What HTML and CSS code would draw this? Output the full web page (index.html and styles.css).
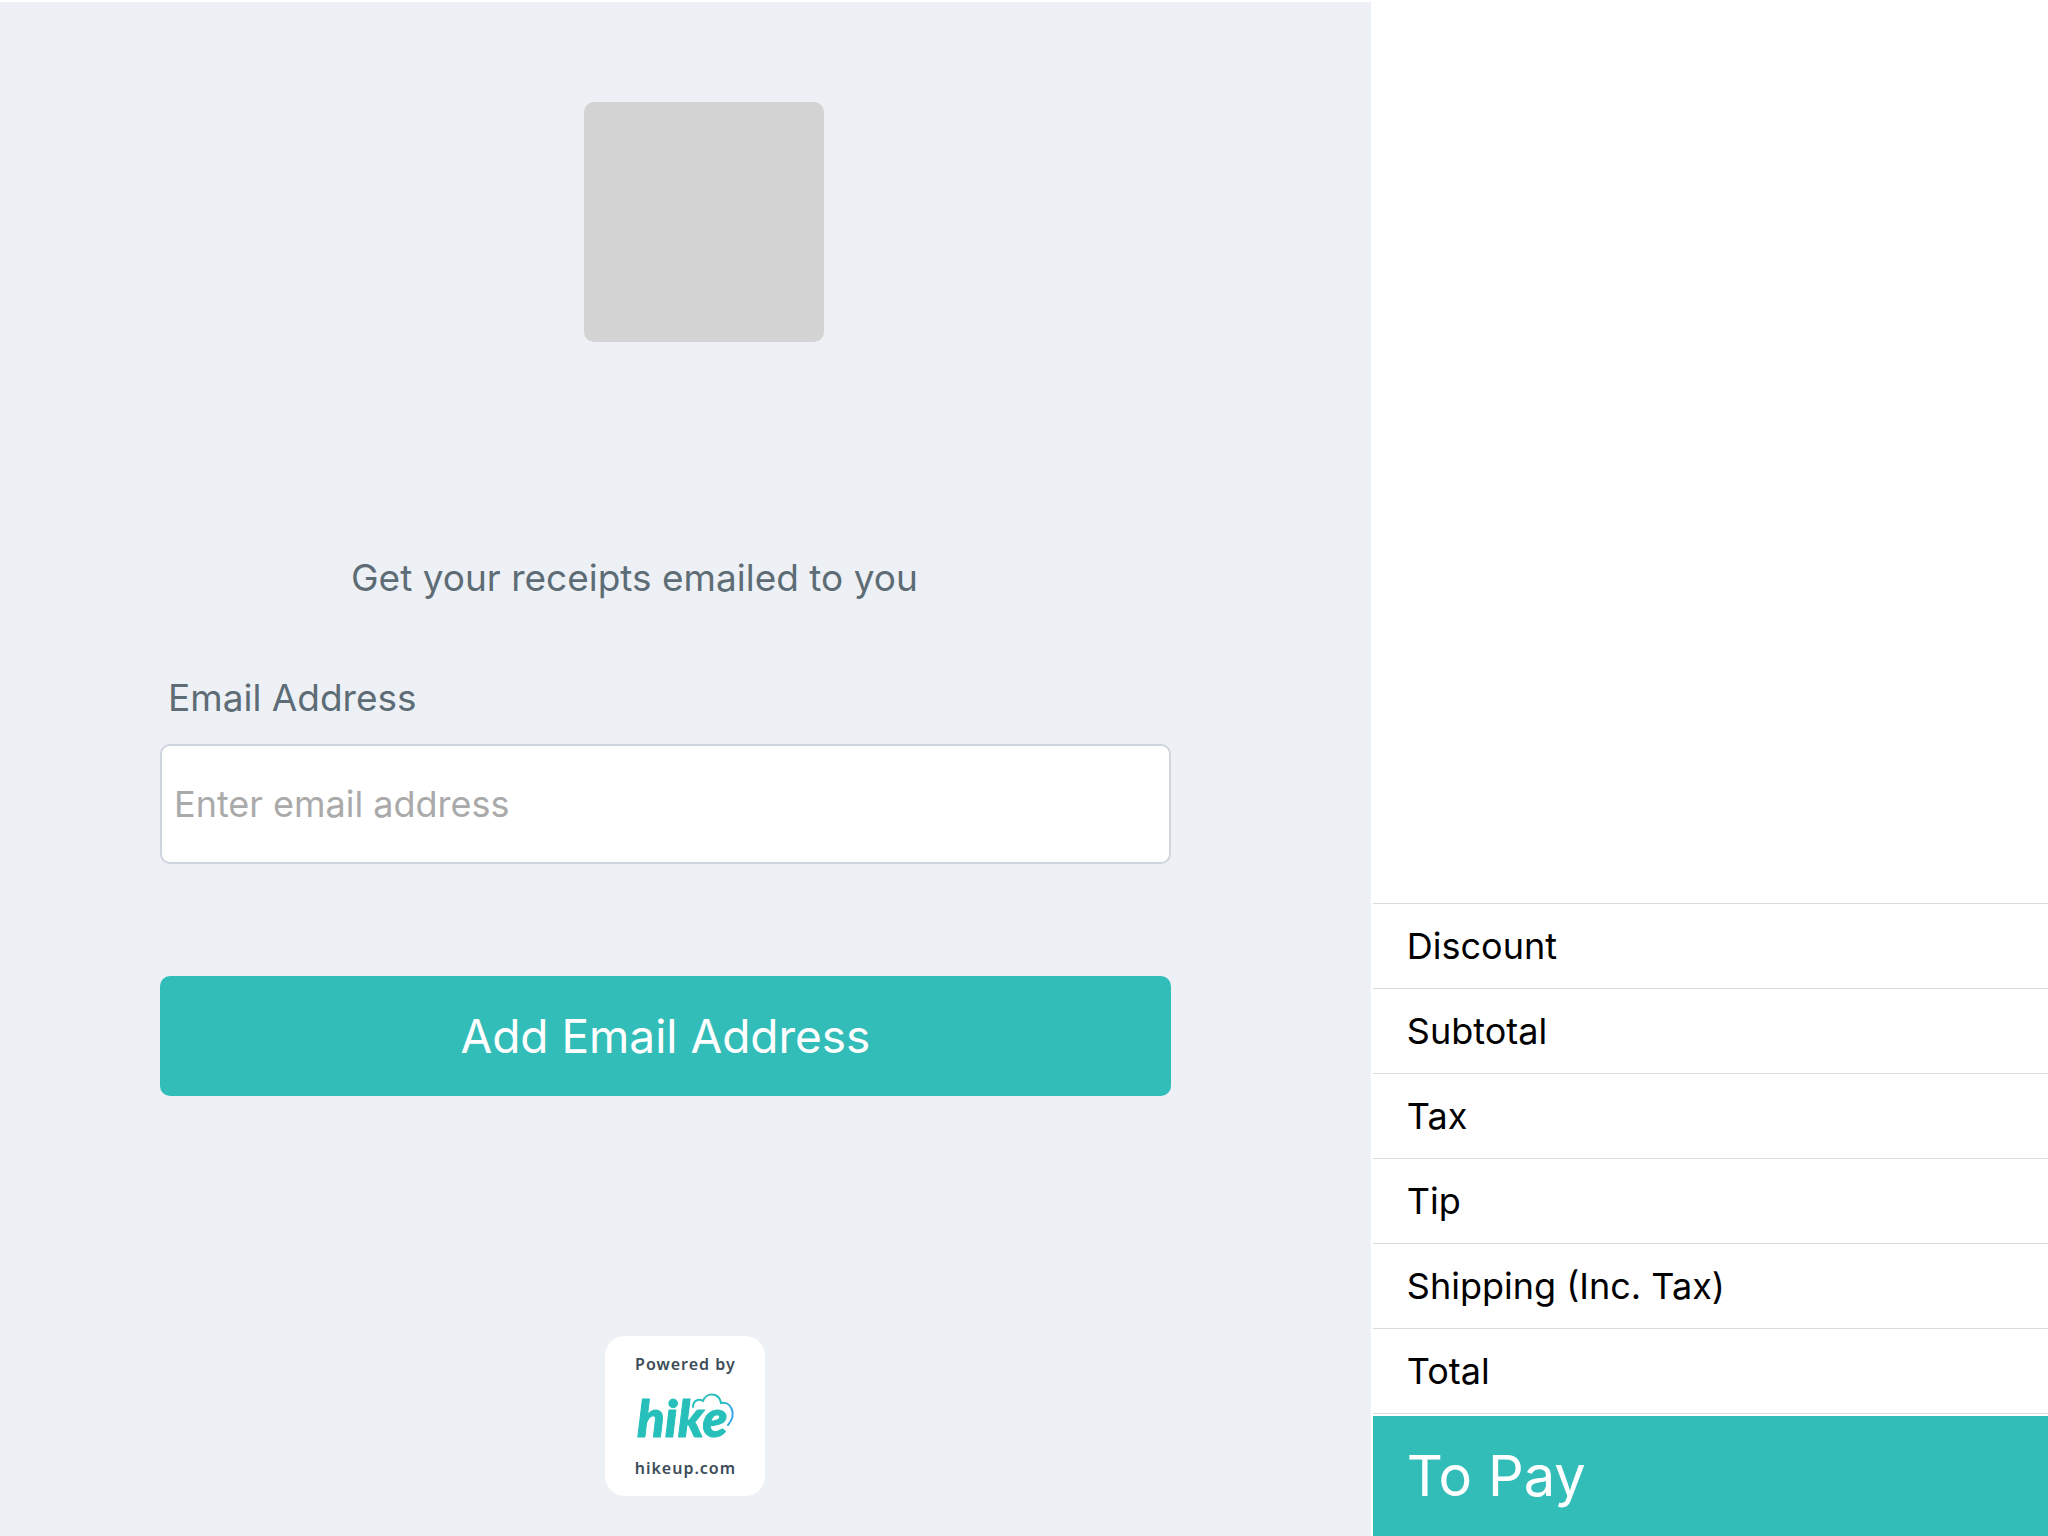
FILE: index.html
```html
<!DOCTYPE html>
<html lang="en">
<head>
    <meta charset="UTF-8">
    <meta name="viewport" content="width=device-width, initial-scale=1.0">
    <title>Customer display</title>
    <link rel="stylesheet" href="styles.css">
</head>
<body>
    <main class="panel">
        <div class="store-logo"></div>
        <h1 class="title">Get your receipts emailed to you</h1>
        <form class="email-form">
            <label for="email">Email Address</label>
            <input type="email" id="email" name="email" placeholder="Enter email address">
            <button type="submit">Add Email Address</button>
        </form>
        <footer class="powered">
            <span>Powered by</span>
            <svg class="hike-logo" viewBox="0 0 100 64" role="img" aria-label="hike">
                <defs>
                    <linearGradient id="cloud" x1="0" y1="0" x2="1" y2="0">
                        <stop offset="0" stop-color="#27bfba"/>
                        <stop offset="0.7" stop-color="#27bfba"/>
                        <stop offset="1" stop-color="#35a4e8"/>
                    </linearGradient>
                </defs>
                <text class="hike-word" x="2" y="53">hike</text>
                <path class="hike-cloud" d="M58 23C58 17 63 14 68 17C71 8 84 8 86 19C95 17 103 29 93 41" stroke="url(#cloud)"/>
            </svg>
            <span>hikeup.com</span>
        </footer>
    </main>
    <aside class="summary">
        <ul class="totals">
            <li>Discount</li>
            <li>Subtotal</li>
            <li>Tax</li>
            <li>Tip</li>
            <li>Shipping (Inc. Tax)</li>
            <li>Total</li>
        </ul>
        <div class="to-pay">To Pay</div>
    </aside>
</body>
</html>
```
FILE: styles.css
```css
*, *::before, *::after {
    margin: 0;
    padding: 0;
    box-sizing: border-box;
}
body {
    min-height: 100vh;
    padding-top: 2px;
    display: grid;
    grid-template-columns: minmax(0, 67fr) minmax(0, 33fr);
    gap: 2px;
    background: #fff;
    color: #000;
    font-family: Inter, "Liberation Sans", sans-serif;
}

/* Left side: receipt sign up */
.panel {
    display: flex;
    flex-direction: column;
    align-items: center;
    padding: 100px 0 40px;
    background: #edf1f6;
}
.store-logo {
    width: 240px;
    height: 240px;
    margin-left: 38px;
    border-radius: 10px;
    background: #d3d3d3;
}
.title {
    margin: 212px 102px 72px 0;
    font-size: 37px;
    font-weight: 400;
    line-height: 48px;
    color: #5d6c75;
}
.email-form {
    align-self: stretch;
    display: flex;
    flex-direction: column;
    padding: 0 200px 0 160px;
}
.email-form label {
    margin: 0 0 22px 8px;
    font-size: 37px;
    line-height: 48px;
    color: #5d6c75;
}
.email-form input {
    width: 100%;
    height: 120px;
    padding: 0 12px;
    border: 2px solid #d0d4dc;
    border-radius: 10px;
    background: #fff;
    font-family: inherit;
    font-size: 36px;
    color: #000;
}
.email-form input::placeholder {
    color: #aaa;
}
.email-form button {
    height: 120px;
    margin-top: 112px;
    border: none;
    border-radius: 10px;
    background: #33bdb9;
    font-family: inherit;
    font-size: 46px;
    color: #fff;
    cursor: pointer;
}

/* Powered by badge */
.powered {
    width: 160px;
    height: 160px;
    margin-top: auto;
    padding: 16px 0;
    display: flex;
    flex-direction: column;
    align-items: center;
    justify-content: space-between;
    border-radius: 20px;
    background: #fff;
    font-family: "Noto Sans", sans-serif;
    font-size: 16px;
    font-weight: 600;
    line-height: 24px;
    letter-spacing: 1px;
    color: #3d4d58;
}
.hike-logo {
    width: 100px;
    height: 64px;
    overflow: visible;
    letter-spacing: 0;
}
.hike-word {
    font-family: Lato, sans-serif;
    font-size: 51px;
    font-style: italic;
    font-weight: 900;
    fill: #27bfba;
    stroke: #27bfba;
    stroke-width: 1px;
    stroke-linejoin: round;
}
.hike-cloud {
    fill: none;
    stroke-width: 2px;
    stroke-linecap: round;
}

/* Right side: sale totals */
.summary {
    display: flex;
    flex-direction: column;
    justify-content: flex-end;
}
.totals {
    margin-bottom: 2px;
    border-bottom: 1px solid #d8dde1;
    list-style: none;
}
.totals li {
    padding: 18px 34px;
    border-top: 1px solid #d8dde1;
    font-size: 36px;
    line-height: 48px;
}
.to-pay {
    padding: 24px 34px;
    background: #33bdb9;
    font-size: 56px;
    line-height: 72px;
    color: #fff;
}
```
